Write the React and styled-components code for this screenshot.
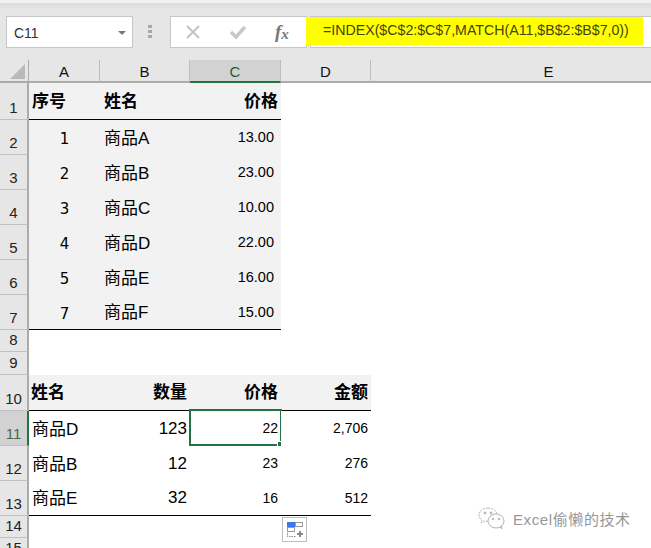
import React from "react";
import styled, { createGlobalStyle } from "styled-components";

const FONT = `"Liberation Sans", "Noto Sans CJK SC", sans-serif`;

const GlobalStyle = createGlobalStyle`
  html, body {
    margin: 0;
    padding: 0;
    background: #fff;
    overflow: hidden;
  }
  body {
    font-family: ${FONT};
  }
`;

const Page = styled.div`
  position: relative;
  width: 651px;
  height: 548px;
  overflow: hidden;
  background: #fff;
  display: flex;
  flex-direction: column;
`;

const TopStrip = styled.div`
  height: 3px;
  flex: none;
  background: #f3f1ee;
`;

const FormulaBar = styled.div`
  height: 57px;
  flex: none;
  box-sizing: border-box;
  padding: 13px 0 0 6px;
  display: flex;
  align-items: flex-start;
  background: linear-gradient(#dcdcdc 0, #e6e6e6 6px, #e6e6e6 100%);
`;

const NameBox = styled.div`
  width: 127px;
  height: 32px;
  box-sizing: border-box;
  background: #fff;
  border: 1px solid #c6c6c6;
  display: flex;
  align-items: center;
  justify-content: space-between;
  padding: 2px 6px 0 7px;
  font-size: 14px;
  color: #333;
`;

const Caret = styled.span`
  width: 0;
  height: 0;
  border-left: 4px solid transparent;
  border-right: 4px solid transparent;
  border-top: 4px solid #777;
`;

const Grip = styled.div`
  width: 4px;
  margin: 9px 18px 0 15px;
  display: flex;
  flex-direction: column;
  gap: 2px;
  span {
    height: 3px;
    background: #a8a8a8;
  }
`;

const FxBox = styled.div`
  width: 137px;
  height: 32px;
  box-sizing: border-box;
  background: #fff;
  border: 1px solid #c6c6c6;
  display: flex;
  align-items: center;
  padding: 0 0 0 14px;
  gap: 28px;
`;

const FxLabel = styled.span`
  font-family: "Liberation Serif", serif;
  font-style: italic;
  font-weight: bold;
  font-size: 19px;
  color: #777;
  sub {
    font-size: 15px;
    vertical-align: -1px;
    line-height: 0;
  }
`;

const FormulaInput = styled.div`
  flex: 1;
  height: 32px;
  margin-left: 3px;
  box-sizing: border-box;
  position: relative;
  background: #fff;
  border: 1px solid #c6c6c6;
  border-right: 0;
`;

const Highlight = styled.div`
  position: absolute;
  left: -5px;
  top: 0;
  width: 337px;
  height: 28px;
  background: #ffff00;
  box-sizing: border-box;
  padding-left: 17px;
  font-size: 14.2px;
  line-height: 27px;
  color: #44440c;
  white-space: nowrap;
`;

const Sheet = styled.div`
  flex: none;
  display: grid;
  grid-template-columns: 29px 71px 90px 91px 90px 356px;
  grid-template-rows: 23px 37px 35px 35px 35px 35px 35px 35px 22px 23px 36px 35px 35px 35px 22px 22px;
`;

const Corner = styled.div`
  background: #e6e6e6;
  border-right: 1px solid #ababab;
  border-bottom: 2px solid #ababab;
  box-sizing: border-box;
  position: relative;
  &::after {
    content: "";
    position: absolute;
    right: 3px;
    bottom: 2px;
    width: 0;
    height: 0;
    border-left: 15px solid transparent;
    border-bottom: 15px solid #b9b9b9;
  }
`;

const ColHead = styled.div`
  box-sizing: border-box;
  background: ${(p) => (p.$active ? "#d2d2d2" : "#e6e6e6")};
  border-bottom: 2px solid ${(p) => (p.$active ? "#217346" : "#ababab")};
  border-right: 1px solid ${(p) => (p.$last ? "#e6e6e6" : "#bdbdbd")};
  color: ${(p) => (p.$active ? "#1f5c3a" : "#111")};
  font-size: 15px;
  display: flex;
  align-items: center;
  justify-content: center;
  padding-top: 2px;
`;

const RowHead = styled.div`
  box-sizing: border-box;
  overflow: hidden;
  background: ${(p) => (p.$active ? "#d2d2d2" : "#e6e6e6")};
  border-bottom: 1px solid #c0c0c0;
  border-right: 2px solid ${(p) => (p.$active ? "#217346" : "#ababab")};
  color: ${(p) => (p.$active ? "#3f6a4c" : "#222")};
  font-size: 15px;
  display: flex;
  align-items: flex-end;
  justify-content: center;
  line-height: 16px;
  padding-bottom: 3px;
`;

const Cell = styled.div`
  position: relative;
  box-sizing: border-box;
  background: ${(p) => (p.$shade ? "#f2f2f2" : "#fff")};
  border-bottom: ${(p) => (p.$rule ? "1px solid #000" : "0")};
  display: flex;
  align-items: center;
  justify-content: ${(p) =>
    p.$align === "right" ? "flex-end" : p.$align === "center" ? "center" : "flex-start"};
  padding: ${(p) => `${p.$drop ?? 0}px ${p.$right ?? 3}px ${p.$lift ?? 3}px ${p.$left ?? 3}px`};
  font-size: ${(p) => p.$size || 17}px;
  font-family: ${(p) => p.$font || "inherit"};
  font-weight: ${(p) => (p.$bold ? "bold" : "normal")};
  color: #000;
  white-space: nowrap;
`;

const Selected = styled.div`
  position: absolute;
  left: -1px;
  top: -2px;
  right: -1px;
  bottom: 0;
  border: 2px solid #217346;
  pointer-events: none;
  &::after {
    content: "";
    position: absolute;
    right: -3px;
    bottom: -3px;
    width: 5px;
    height: 5px;
    background: #217346;
    border: 1px solid #fff;
    border-right: 0;
    border-bottom: 0;
  }
`;

const PasteButton = styled.div`
  position: absolute;
  left: 282px;
  top: 517px;
  width: 25px;
  height: 25px;
  box-sizing: border-box;
  background: #fff;
  border: 1px solid #bdbdbd;
  display: flex;
  align-items: center;
  justify-content: center;
`;

const Watermark = styled.div`
  position: absolute;
  left: 478px;
  top: 506px;
  display: flex;
  align-items: center;
  gap: 7px;
  color: #979797;
  font-size: 15px;
  letter-spacing: 0.6px;
`;

const columns = ["A", "B", "C", "D", "E"];

const DIGIT_FONT = `"DejaVu Sans", sans-serif`;

const topRows = [
  ["1", "商品A", "13.00"],
  ["2", "商品B", "23.00"],
  ["3", "商品C", "10.00"],
  ["4", "商品D", "22.00"],
  ["5", "商品E", "16.00"],
  ["7", "商品F", "15.00"],
];

const bottomRows = [
  ["商品D", "123", "22", "2,706"],
  ["商品B", "12", "23", "276"],
  ["商品E", "32", "16", "512"],
];

const CrossIcon = () => (
  <svg width="16" height="16" viewBox="0 0 16 16" fill="none" stroke="#c4c4c4" strokeWidth="2">
    <path d="M2 2l12 12M14 2L2 14" />
  </svg>
);

const CheckIcon = () => (
  <svg width="18" height="16" viewBox="0 0 18 16" fill="none" stroke="#c8c8c8" strokeWidth="3.5">
    <path d="M2 8l5 5L16 3" />
  </svg>
);

const PasteIcon = () => (
  <svg width="18" height="18" viewBox="0 0 18 18">
    <rect x="1" y="1" width="8" height="5" fill="#3b78f0" />
    <rect x="9.5" y="1.5" width="7" height="4" fill="#fff" stroke="#999" />
    <rect x="1.5" y="6.5" width="7" height="4" fill="#fff" stroke="#999" />
    <path d="M1.5 12v3.5h8" fill="none" stroke="#888" strokeDasharray="1.5 1" />
    <path d="M11 13h6M14 10v6" stroke="#888" strokeWidth="2" />
  </svg>
);

const WeChatIcon = () => (
  <svg width="28" height="24" viewBox="0 0 28 24" fill="none" stroke="#b4b4b4" strokeWidth="1">
    <path d="M10 2C5 2 1 5 1 9c0 2 1 4 3 5l-1 3 4-2c1 .3 2 .4 3 .4" strokeDasharray="2 1" />
    <path d="M10 2c4 0 8 2 9 6" strokeDasharray="2 1" />
    <ellipse cx="18" cy="15" rx="8" ry="7" />
    <path d="M22 21l2 2-.5-3" />
    <circle cx="7" cy="7" r="1" fill="#b4b4b4" />
    <circle cx="13" cy="7" r="1" fill="#b4b4b4" />
    <circle cx="15" cy="13" r=".8" fill="#b4b4b4" />
    <circle cx="21" cy="13" r=".8" fill="#b4b4b4" />
  </svg>
);

const EmptyRow = ({ n }) => (
  <>
    <RowHead>{n}</RowHead>
    <Cell />
    <Cell />
    <Cell />
    <Cell />
    <Cell />
  </>
);

const App = () => {
  return (
    <Page>
      <GlobalStyle />
      <TopStrip />
      <FormulaBar>
        <NameBox>
          C11
          <Caret />
        </NameBox>
        <Grip>
          <span />
          <span />
          <span />
        </Grip>
        <FxBox>
          <CrossIcon />
          <CheckIcon />
          <FxLabel>
            f<sub>x</sub>
          </FxLabel>
        </FxBox>
        <FormulaInput>
          <Highlight>=INDEX($C$2:$C$7,MATCH(A11,$B$2:$B$7,0))</Highlight>
        </FormulaInput>
      </FormulaBar>
      <Sheet>
        <Corner />
        {columns.map((c) => (
          <ColHead key={c} $active={c === "C"} $last={c === "E"}>
            {c}
          </ColHead>
        ))}

        <RowHead>1</RowHead>
        <Cell $shade $rule $bold $lift={4}>序号</Cell>
        <Cell $shade $rule $bold $lift={4} $left={4}>姓名</Cell>
        <Cell $shade $rule $bold $lift={4} $align="right">价格</Cell>
        <Cell />
        <Cell />

        {topRows.map((r, i) => (
          <React.Fragment key={r[1]}>
            <RowHead>{i + 2}</RowHead>
            <Cell $shade $rule={i === 5} $align="center" $size={15} $font={DIGIT_FONT} $lift={0} $drop={3}>{r[0]}</Cell>
            <Cell $shade $rule={i === 5} $left={4}>{r[1]}</Cell>
            <Cell $shade $rule={i === 5} $align="right" $right={7} $size={14.5} $lift={1}>{r[2]}</Cell>
            <Cell />
            <Cell />
          </React.Fragment>
        ))}

        <EmptyRow n={8} />
        <EmptyRow n={9} />

        <RowHead>10</RowHead>
        <Cell $shade $rule $bold $lift={4} $left={2}>姓名</Cell>
        <Cell $shade $rule $bold $lift={4} $align="right">数量</Cell>
        <Cell $shade $rule $bold $lift={4} $align="right">价格</Cell>
        <Cell $shade $rule $bold $lift={4} $align="right">金额</Cell>
        <Cell />

        {bottomRows.map((r, i) => (
          <React.Fragment key={r[0]}>
            <RowHead $active={i === 0}>{i + 11}</RowHead>
            <Cell $rule={i === 2}>{r[0]}</Cell>
            <Cell $rule={i === 2} $align="right" $lift={0}>{r[1]}</Cell>
            <Cell $rule={i === 2} $align="right" $size={14} $lift={1}>
              {r[2]}
              {i === 0 && <Selected />}
            </Cell>
            <Cell $rule={i === 2} $align="right" $size={14} $lift={1}>{r[3]}</Cell>
            <Cell />
          </React.Fragment>
        ))}

        <EmptyRow n={14} />
        <EmptyRow n={15} />
      </Sheet>
      <PasteButton>
        <PasteIcon />
      </PasteButton>
      <Watermark>
        <WeChatIcon />
        Excel偷懒的技术
      </Watermark>
    </Page>
  );
};

export default App;
